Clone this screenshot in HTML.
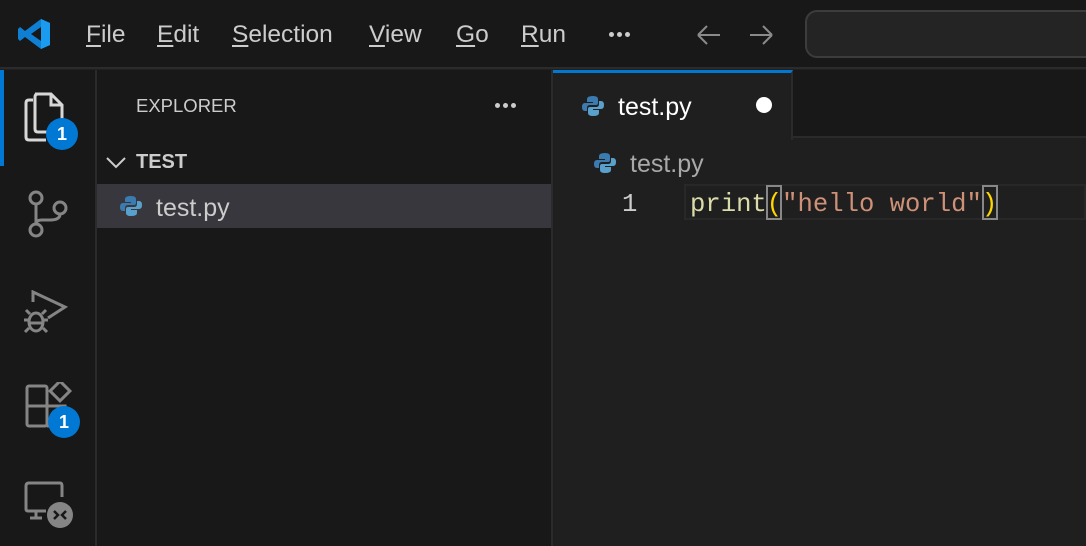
<!DOCTYPE html>
<html><head><style>
*{margin:0;padding:0;box-sizing:border-box}
body{width:1086px;height:546px;background:#1f1f1f;overflow:hidden;position:relative;font-family:"Liberation Sans",sans-serif;color:#ccc}
.abs{position:absolute}
.menu{top:21px;font-size:24.5px;color:#ccc}
.menu u{text-decoration:underline;text-underline-offset:3px}
.dots{position:absolute;width:22px;height:6px}
.dots i{position:absolute;top:0;width:5px;height:5px;border-radius:3px;background:#ccc}
</style></head><body>
<div class="abs" style="left:0;top:0;width:1086px;height:69px;background:#181818;border-bottom:2px solid #2b2b2b"></div>
<svg class="abs" style="left:17px;top:17px" width="34" height="34" viewBox="0 0 34 34">
<path d="M24 2 L33 6 V28 L24 32 L8 20 L3 24 L1 22 V12 L3 10 L8 14 Z M24 10 L14 17 L24 24 Z" fill="#0f7fd4" fill-rule="evenodd"/>
<path d="M24 2 L33 6 V28 L24 32 Z" fill="#1a9bf0"/>
</svg>
<div class="abs menu" style="left:86px"><u>F</u>ile</div>
<div class="abs menu" style="left:157px"><u>E</u>dit</div>
<div class="abs menu" style="left:232px"><u>S</u>election</div>
<div class="abs menu" style="left:369px"><u>V</u>iew</div>
<div class="abs menu" style="left:456px"><u>G</u>o</div>
<div class="abs menu" style="left:521px"><u>R</u>un</div>
<div class="dots" style="left:609px;top:32px"><i style="left:0"></i><i style="left:8px"></i><i style="left:16px"></i></div>
<svg class="abs" style="left:694px;top:22px" width="84" height="26" viewBox="0 0 84 26"><path d="M4 13H26M4 13L13 4M4 13L13 22" stroke="#8a8a8a" stroke-width="2" fill="none"/><path d="M56 13H78M78 13L69 4M78 13L69 22" stroke="#8a8a8a" stroke-width="2" fill="none"/></svg>
<div class="abs" style="left:805px;top:10px;width:300px;height:48px;border:2px solid #3c3c3c;border-radius:12px;background:#242424"></div>
<!-- activity bar -->
<div class="abs" style="left:0;top:70px;width:97px;height:476px;background:#181818;border-right:2px solid #2b2b2b"></div>
<div class="abs" style="left:0;top:70px;width:4px;height:96px;background:#0078d4"></div>
<svg class="abs" style="left:24px;top:92px" width="46" height="52" viewBox="0 0 46 52" fill="none" stroke="#d7d7d7" stroke-width="3"><path d="M9 8H5Q2 8 2 11V45Q2 48 5 48H22"/><path d="M11 2H27L38 13V36Q38 40 34 40H14Q11 40 11 37V5Q11 2 14 2Z"/><path d="M27 2V13H38"/></svg>
<div class="abs" style="left:46px;top:118px;width:32px;height:32px;border-radius:16px;background:#0078d4;color:#fff;font-weight:bold;font-size:18px;text-align:center;line-height:32px">1</div>
<svg class="abs" style="left:26px;top:190px" width="44" height="50" viewBox="0 0 44 50" fill="none" stroke="#858585" stroke-width="3"><circle cx="10" cy="8" r="6"/><circle cx="10" cy="40" r="6"/><circle cx="34" cy="18" r="6"/><path d="M10 14V34M34 24Q34 30 24 30H16Q10 30 10 34"/></svg>
<svg class="abs" style="left:22px;top:290px" width="46" height="46" viewBox="0 0 46 46" fill="none" stroke="#858585" stroke-width="3"><path d="M11 12V2L43 17L26 28"/><ellipse cx="14" cy="32" rx="7" ry="9"/><path d="M7 30H2M21 30H26M7 38L3 42M21 38L25 42M8 24L4 20M20 24L24 20M7 33H21"/></svg>
<svg class="abs" style="left:25px;top:382px" width="50" height="50" viewBox="0 0 50 50" fill="none" stroke="#858585" stroke-width="3"><rect x="2" y="4" width="20" height="40" rx="2"/><path d="M2 24H40V44H22"/><rect x="28" y="2" width="14" height="14" transform="rotate(45 35 9) translate(0 0)"/></svg>
<div class="abs" style="left:48px;top:406px;width:32px;height:32px;border-radius:16px;background:#0078d4;color:#fff;font-weight:bold;font-size:18px;text-align:center;line-height:32px">1</div>
<svg class="abs" style="left:24px;top:481px" width="50" height="50" viewBox="0 0 50 50" fill="none" stroke="#858585" stroke-width="3"><path d="M22 30H4Q2 30 2 28V5Q2 2 5 2H36Q38 2 38 5V16M12 30V37M6 37H18"/><circle cx="36" cy="34" r="13" fill="#858585" stroke="none"/><path d="M30 30L34 34L30 38M42 30L38 34L42 38" stroke="#181818" stroke-width="2.5"/></svg>
<!-- sidebar -->
<div class="abs" style="left:97px;top:70px;width:456px;height:476px;background:#181818;border-right:2px solid #2b2b2b"></div>
<div class="abs" style="left:136px;top:95px;font-size:18.5px;color:#ccc">EXPLORER</div>
<div class="dots" style="left:495px;top:103px"><i style="left:0"></i><i style="left:8px"></i><i style="left:16px"></i></div>
<svg class="abs" style="left:105px;top:155px" width="22" height="16"><path d="M2 3L11 12L20 3" stroke="#ccc" stroke-width="2" fill="none"/></svg>
<div class="abs" style="left:136px;top:151px;font-size:20px;font-weight:bold;color:#ccc">TEST</div>
<div class="abs" style="left:97px;top:184px;width:454px;height:44px;background:#37373d"></div>
<svg class="abs" style="left:120px;top:195px" width="22" height="22" viewBox="0 0 22 22"><path d="M11 1Q5 1 5 4V7H11V8H3Q0 8 0 12Q0 16 3 16H5V13Q5 10 8 10H14Q16 10 16 8V4Q16 1 11 1Z" fill="#3b7bb0"/><path d="M11 21Q17 21 17 18V15H11V14H19Q22 14 22 10Q22 6 19 6H17V9Q17 12 14 12H8Q6 12 6 14V18Q6 21 11 21Z" fill="#5aa0cc"/></svg>
<div class="abs" style="left:156px;top:194px;font-size:25px;color:#ccc">test.py</div>
<!-- tabs -->
<div class="abs" style="left:553px;top:70px;width:533px;height:68px;background:#181818;border-bottom:2px solid #2b2b2b"></div>
<div class="abs" style="left:553px;top:70px;width:240px;height:70px;background:#1f1f1f;border-top:3px solid #0078d4;border-right:2px solid #2b2b2b"></div>
<svg class="abs" style="left:582px;top:95px" width="22" height="22" viewBox="0 0 22 22"><path d="M11 1Q5 1 5 4V7H11V8H3Q0 8 0 12Q0 16 3 16H5V13Q5 10 8 10H14Q16 10 16 8V4Q16 1 11 1Z" fill="#3b7bb0"/><path d="M11 21Q17 21 17 18V15H11V14H19Q22 14 22 10Q22 6 19 6H17V9Q17 12 14 12H8Q6 12 6 14V18Q6 21 11 21Z" fill="#5aa0cc"/></svg>
<div class="abs" style="left:618px;top:93px;font-size:25px;color:#fff">test.py</div>
<div class="abs" style="left:756px;top:97px;width:16px;height:16px;border-radius:8px;background:#fff"></div>
<svg class="abs" style="left:594px;top:152px" width="22" height="22" viewBox="0 0 22 22"><path d="M11 1Q5 1 5 4V7H11V8H3Q0 8 0 12Q0 16 3 16H5V13Q5 10 8 10H14Q16 10 16 8V4Q16 1 11 1Z" fill="#3b7bb0"/><path d="M11 21Q17 21 17 18V15H11V14H19Q22 14 22 10Q22 6 19 6H17V9Q17 12 14 12H8Q6 12 6 14V18Q6 21 11 21Z" fill="#5aa0cc"/></svg>
<div class="abs" style="left:630px;top:150px;font-size:25px;color:#a9a9a9">test.py</div>
<div class="abs" style="left:684px;top:184px;width:402px;height:36px;border:2px solid #282828"></div>
<div class="abs" style="left:622px;top:190px;font-family:'Liberation Mono',monospace;font-size:25.6px;color:#ccc">1</div>
<div class="abs" style="left:766px;top:185px;width:16px;height:35px;border:2px solid #888"></div>
<div class="abs" style="left:982px;top:185px;width:16px;height:35px;border:2px solid #888"></div>
<div class="abs" style="left:690px;top:190px;font-family:'Liberation Mono',monospace;font-size:25.6px;white-space:pre"><span style="color:#dcdcaa">print</span><span style="color:#ffd700">(</span><span style="color:#ce9178">"hello world"</span><span style="color:#ffd700">)</span></div>
</body></html>
